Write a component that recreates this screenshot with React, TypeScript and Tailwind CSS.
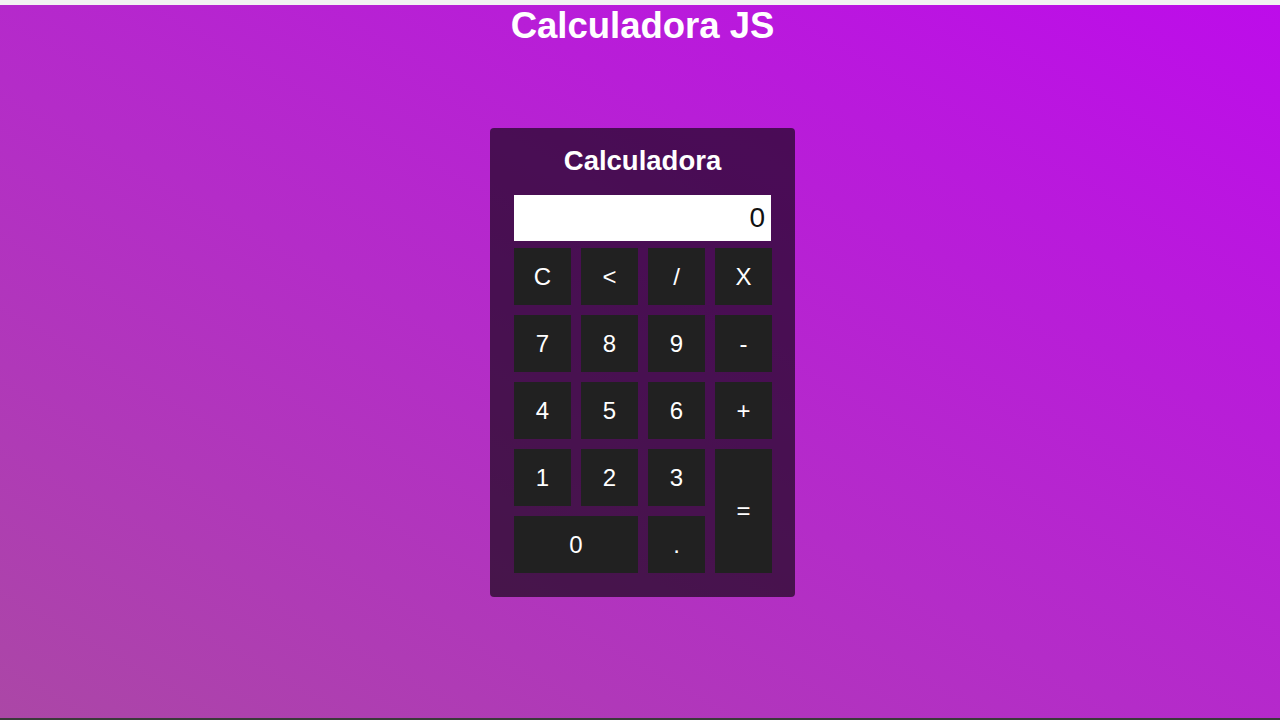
const keys = [
  { label: "C" },
  { label: "<" },
  { label: "/" },
  { label: "X" },
  { label: "7" },
  { label: "8" },
  { label: "9" },
  { label: "-" },
  { label: "4" },
  { label: "5" },
  { label: "6" },
  { label: "+" },
  { label: "1" },
  { label: "2" },
  { label: "3" },
  { label: "=", className: "row-span-2" },
  { label: "0", className: "col-span-2" },
  { label: "." },
];

export default function App() {
  return (
    <div className="h-[720px] flex flex-col font-['Liberation_Sans',Arial,sans-serif]">
      <div className="h-[5px] bg-[#f2f2f2]" />
      <main className="flex-1 flex flex-col items-center pl-[5px] bg-[linear-gradient(to_top_right,#ab47a6,#b42cc8_45%,#bd0cea)]">
        <h1 className="text-[36.5px] font-bold text-white leading-[41px]">Calculadora JS</h1>
        <div className="mt-[82px] w-[305px] rounded-[4px] bg-black/60 px-[24px] pt-[17px] pb-[24px]">
          <h2 className="text-center text-[27.5px] leading-[32px] font-bold text-white">Calculadora</h2>
          <div className="mt-[18px] h-[46px] bg-white flex items-center justify-end pr-[6px] text-[28px] text-[#111]">
            0
          </div>
          <div className="mt-[7px] grid grid-cols-[repeat(4,57px)] auto-rows-[57px] gap-[10px]">
            {keys.map((k) => (
              <button
                key={k.label}
                className={`bg-[#212121] text-white text-[24px] flex items-center justify-center ${k.className ?? ""}`}
              >
                {k.label}
              </button>
            ))}
          </div>
        </div>
      </main>
      <div className="h-[2px] bg-[#3a3a3a]" />
    </div>
  );
}
